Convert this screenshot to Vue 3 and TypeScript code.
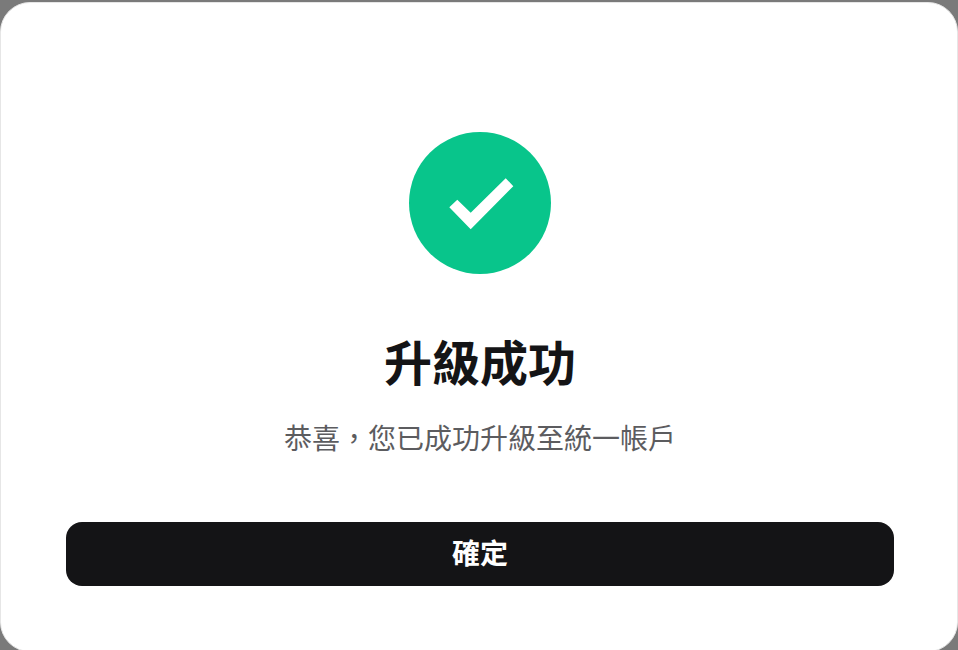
<script setup lang="ts">
const title: string = '升級成功'
const message: string = '恭喜\uFF0C您已成功升級至統一帳戶'
const confirmLabel: string = '確定'
</script>

<template>
  <div class="page">
    <section class="card">
      <svg class="status" viewBox="0 0 142 142" aria-hidden="true">
        <circle cx="71" cy="71" r="71" fill="#08c58b" />
        <path d="M40.3 75.2 48.3 67.8 61.7 80.8 96.7 46.2 104.3 54.2 61.7 97.2Z" fill="#fff" />
      </svg>
      <h1 class="title">{{ title }}</h1>
      <p class="message">{{ message }}</p>
      <button class="confirm" type="button">{{ confirmLabel }}</button>
    </section>
  </div>
</template>

<style>
html, body { margin: 0; background: #7a7a7a; overflow: hidden; }
</style>

<style scoped>
.page {
  width: 958px;
  height: 650px;
  overflow: hidden;
  background: #7a7a7a;
  padding-top: 2px;
  box-sizing: border-box;
}
.card {
  width: 958px;
  height: 650px;
  box-sizing: border-box;
  background: #fff;
  border: 1px solid #e6e6e6;
  border-radius: 30px;
  padding: 129.3px 63px 0 65px;
  display: flex;
  flex-direction: column;
  align-items: center;
  font-family: "Noto Sans CJK TC", "Noto Sans", sans-serif;
}
.status { width: 142px; height: 142px; display: block; flex: none; }
.title {
  margin: 54px 0 0;
  font-size: 48px;
  line-height: 64px;
  font-weight: 700;
  color: #141416;
}
.message {
  margin: 25px 0 0;
  font-size: 28px;
  line-height: 40px;
  font-weight: 400;
  color: #5c5c5f;
}
.confirm {
  width: 828px;
  height: 64px;
  margin-top: 65px;
  border: 0;
  border-radius: 16px;
  background: #141416;
  color: #fff;
  font-family: inherit;
  font-size: 28px;
  font-weight: 700;
  padding: 0 0 5px;
}
</style>
